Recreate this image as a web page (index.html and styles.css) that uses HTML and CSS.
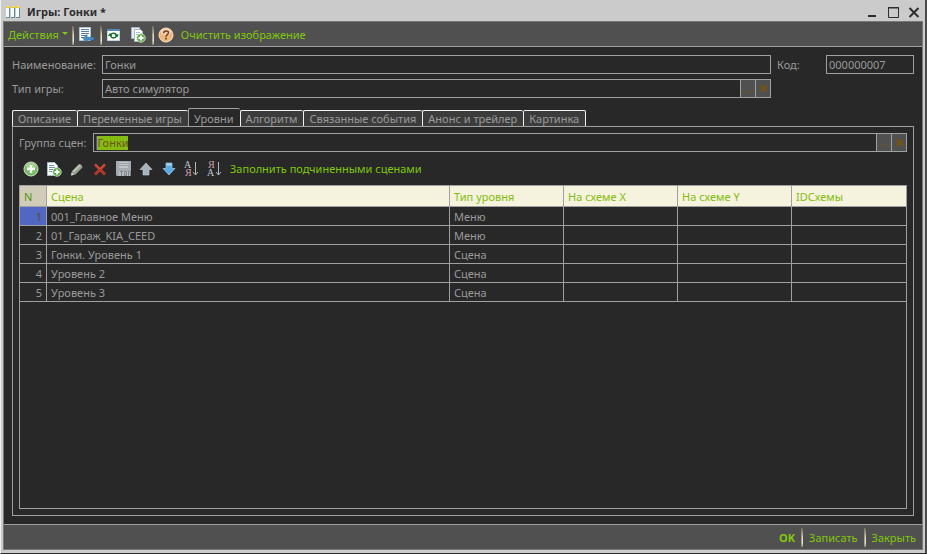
FILE: index.html
```html
<!DOCTYPE html>
<html lang="ru">
<head>
    <meta charset="UTF-8">
    <meta name="viewport" content="width=device-width, initial-scale=1.0">
    <title>Игры: Гонки *</title>
    <link rel="stylesheet" href="styles.css">
</head>
<body>
    <div class="window">
        <!-- Title bar -->
        <header class="titlebar">
            <svg class="title-icon" width="14" height="14" viewBox="0 0 14 14">
                <path fill="#68899f" d="M0 1h4v12H0zM5 1h4v12H5zM10 1h4v12h-4z"/>
                <path fill="#f8fbfc" d="M0 3h3v9H0zM5 3h3v9H5zM10 3h3v9h-3z"/>
                <path fill="#e8c838" d="M0 1h4v2H0zM5 1h4v2H5zM10 1h4v2h-4z"/>
                <path fill="#ffef70" d="M1 1h2v1H1zM6 1h2v1H6zM11 1h2v1h-2z"/>
            </svg>
            <h1 class="title">Игры: Гонки *</h1>
            <button class="win-button" aria-label="Свернуть">
                <svg width="12" height="12" viewBox="0 0 12 12"><path fill="#2d2d2d" d="M2 9h8v2H2z"/></svg>
            </button>
            <button class="win-button" aria-label="Развернуть">
                <svg width="12" height="12" viewBox="0 0 12 12"><path fill="none" stroke="#2d2d2d" d="M1.500 1.500h10v10h-10z"/><path fill="#2d2d2d" d="M1 1h11v1.500H1z"/></svg>
            </button>
            <button class="win-button" aria-label="Закрыть окно">
                <svg width="12" height="12" viewBox="0 0 12 12"><path stroke="#2d2d2d" stroke-width="2" d="M1.500 2l9 9M10.500 2l-9 9"/></svg>
            </button>
        </header>

        <div class="frame">
            <!-- Main toolbar -->
            <div class="toolbar">
                <button class="text-button menu-button">Действия<span class="arrow"></span></button>
                <span class="separator"></span>
                <button class="icon-button" aria-label="Перечитать">
                    <svg width="16" height="16" viewBox="0 0 16 16">
                        <path fill="#fff" stroke="#b4c3d2" d="M1.500.5h11v13h-11z"/>
                        <path stroke="#5d7f9f" d="M3 2.500h8M3 4.500h8M3 6.500h8M3 8.500h5M3 10.500h3"/>
                        <path fill="#4a90c8" stroke="#28618f" stroke-width=".6" d="M5 11.500l4-4v2.700h7v2.800H9v2.500z"/>
                    </svg>
                </button>
                <span class="separator"></span>
                <button class="icon-button" aria-label="Обновить">
                    <svg width="16" height="16" viewBox="0 0 16 16">
                        <path fill="#fff" stroke="#c4d4e2" d="M1.500 2.500h12v11h-12z"/>
                        <path fill="#5588b8" d="M1 2h13v2H1z"/>
                        <path fill="none" stroke="#167032" stroke-width="1.500" d="M4.500 8c1-2.500 5-2.500 6 0M10.500 9c-1 2.500-5 2.500-6 0"/>
                        <path fill="#167032" d="M8.500 7.500h4.500l-2 3zM6.500 9H2l2-3z"/>
                    </svg>
                </button>
                <button class="icon-button copy" aria-label="Скопировать">
                    <svg width="16" height="16" viewBox="0 0 16 16">
                        <path fill="#e7eef4" stroke="#a5b6c5" d="M1.500.5h8v11h-8z"/>
                        <path fill="#fff" stroke="#a5b6c5" d="M4.500 2.500h6l2 2v10h-8z"/>
                        <path stroke="#a9bccc" d="M6 5.500h4M6 7.500h3"/>
                        <circle cx="11" cy="11" r="4.300" fill="#63a850" stroke="#d1e5ca" stroke-width=".8"/>
                        <path stroke="#fff" stroke-width="1.800" d="M11 8.500v5M8.500 11h5"/>
                    </svg>
                </button>
                <span class="separator"></span>
                <button class="icon-button help" aria-label="Справка">
                    <svg width="16" height="16" viewBox="0 0 16 16">
                        <circle cx="8" cy="8" r="7" fill="#f3b77c" stroke="#fbe2c6"/>
                        <ellipse cx="8" cy="5" rx="5" ry="3.500" fill="#f9d3ab"/>
                        <path fill="none" stroke="#6b4630" stroke-width="1.500" d="M5.700 6.300c0-3 4.800-3 4.800-.5C10.500 7.300 8 7.500 8 9.700"/>
                        <path fill="#6b4630" d="M7.200 10.800h1.700v1.700H7.200z"/>
                    </svg>
                </button>
                <button class="text-button">Очистить изображение</button>
            </div>

            <main class="content">
                <div class="form">
                    <label for="name">Наименование:</label>
                    <input class="field" id="name" type="text" value="Гонки">
                    <label for="code">Код:</label>
                    <input class="field" id="code" type="text" value="000000007">
                    <label for="kind">Тип игры:</label>
                    <div class="picker">
                        <input class="field" id="kind" type="text" value="Авто симулятор">
                        <button class="pick" aria-label="Выбрать тип"><svg width="10" height="9" viewBox="0 0 10 9"><path fill="#75550c" d="M0 7h2v1H0zM4 7h2v1H4zM8 7h2v1H8z"/></svg></button>
                        <button class="pick" aria-label="Очистить тип"><svg width="9" height="9" viewBox="0 0 9 9"><path stroke="#75550c" stroke-width="2" d="M1.500 1.500l6 6M7.500 1.500l-6 6"/></svg></button>
                    </div>
                </div>

                <nav class="tabs">
                    <button class="tab">Описание</button>
                    <button class="tab">Переменные игры</button>
                    <button class="tab active">Уровни</button>
                    <button class="tab">Алгоритм</button>
                    <button class="tab">Связанные события</button>
                    <button class="tab">Анонс и трейлер</button>
                    <button class="tab">Картинка</button>
                </nav>

                <section class="panel">
                    <div class="group">
                        <label for="group">Группа сцен:</label>
                        <div class="picker">
                            <div class="field selected-field"><input class="selected" id="group" type="text" value="Гонки"></div>
                            <button class="pick" aria-label="Выбрать группу"><svg width="10" height="9" viewBox="0 0 10 9"><path fill="#75550c" d="M0 7h2v1H0zM4 7h2v1H4zM8 7h2v1H8z"/></svg></button>
                            <button class="pick" aria-label="Очистить группу"><svg width="9" height="9" viewBox="0 0 9 9"><path stroke="#75550c" stroke-width="2" d="M1.500 1.500l6 6M7.500 1.500l-6 6"/></svg></button>
                        </div>
                    </div>

                    <!-- Table toolbar -->
                    <div class="table-tools">
                        <button class="icon-button" aria-label="Добавить">
                            <svg width="16" height="16" viewBox="0 0 16 16">
                                <circle cx="8" cy="8" r="7" fill="#78b764" stroke="#cfe5c4"/>
                                <ellipse cx="8" cy="5" rx="5" ry="3.500" fill="#a4d08f"/>
                                <path stroke="#fff" stroke-width="2.400" d="M8 4v8M4 8h8"/>
                            </svg>
                        </button>
                        <button class="icon-button" aria-label="Добавить копированием">
                            <svg width="16" height="16" viewBox="0 0 16 16">
                                <path fill="#fff" stroke="#a9bccc" d="M1.500 1.500h7l3 3v10h-10z"/>
                                <path stroke="#7192b0" d="M3 4.500h5M3 6.500h6M3 8.500h4M3 10.500h3"/>
                                <circle cx="11" cy="11" r="4.300" fill="#63a850" stroke="#d1e5ca" stroke-width=".8"/>
                                <path stroke="#fff" stroke-width="1.800" d="M11 8.500v5M8.500 11h5"/>
                            </svg>
                        </button>
                        <button class="icon-button" aria-label="Изменить">
                            <svg width="16" height="16" viewBox="0 0 16 16">
                                <path fill="#93a08e" d="M3 10l7-7q3 0 3.500 3.500l-7 7-4.500 1z"/>
                                <path fill="#bcc5b8" d="M4 10l6.500-6.500 1.300 1.300L5 11.500z"/>
                                <path fill="#d5dad2" d="M2 14.500l.7-3 2.300 2.300z"/>
                            </svg>
                        </button>
                        <button class="icon-button" aria-label="Удалить">
                            <svg width="16" height="16" viewBox="0 0 16 16"><path stroke="#b8382c" stroke-width="3" d="M3 3.500l10 10M13 3.500l-10 10"/><path stroke="#d35a4c" d="M3 3l5 5 5-5"  fill="none"/></svg>
                        </button>
                        <button class="icon-button" aria-label="Закончить редактирование">
                            <svg width="16" height="16" viewBox="0 0 16 16">
                                <path fill="#a5abb1" d="M1 0h15v15H2l-1-1z"/>
                                <path fill="#c1c6ca" d="M4 1h9v6H4z"/>
                                <path stroke="#9ba1a6" d="M4 2.500h9M4 4.500h9"/>
                                <path fill="#b8bdc2" d="M4 10h12v5H4z"/>
                                <path fill="none" stroke="#7d8388" d="M5 10.500h3M6.500 10v5M9.500 10.500h2v4h-2zM13.500 15v-4.500h2V15"/>
                            </svg>
                        </button>
                        <button class="icon-button" aria-label="Переместить вверх">
                            <svg width="16" height="16" viewBox="0 0 16 16"><path fill="#a6b3bd" stroke="#cbd3d9" stroke-width=".6" d="M8 2l6 6.500h-3V14H5V8.500H2z"/></svg>
                        </button>
                        <button class="icon-button" aria-label="Переместить вниз">
                            <svg width="16" height="16" viewBox="0 0 16 16"><path fill="#58ace2" stroke="#b4dcf5" stroke-width=".6" d="M8 14L2 7.500h3V2h6v5.500h3z"/><path fill="#a8d9f7" d="M5.500 2.500h5v2h-5z"/></svg>
                        </button>
                        <button class="icon-button sort" aria-label="Сортировать по возрастанию">
                            <svg width="16" height="20" viewBox="0 0 16 20">
                                <text class="sort-up" x="0" y="9">А</text><text class="sort-down" x="1" y="17">Я</text>
                                <path fill="none" stroke="#aebbc5" d="M11.500 3v13M9 13l2.500 3 2.500-3"/>
                            </svg>
                        </button>
                        <button class="icon-button sort" aria-label="Сортировать по убыванию">
                            <svg width="16" height="20" viewBox="0 0 16 20">
                                <text class="sort-down" x="1" y="9">Я</text><text class="sort-up" x="0" y="17">А</text>
                                <path fill="none" stroke="#aebbc5" d="M11.500 3v13M9 13l2.500 3 2.500-3"/>
                            </svg>
                        </button>
                        <button class="text-button">Заполнить подчиненными сценами</button>
                    </div>

                    <div class="grid">
                        <table>
                            <colgroup>
                                <col class="col-n"><col><col class="col-data"><col class="col-data"><col class="col-data"><col class="col-data">
                            </colgroup>
                            <thead>
                                <tr><th>N</th><th>Сцена</th><th>Тип уровня</th><th>На схеме X</th><th>На схеме Y</th><th>IDСхемы</th></tr>
                            </thead>
                            <tbody>
                                <tr class="current"><td>1</td><td>001_Главное Меню</td><td>Меню</td><td></td><td></td><td></td></tr>
                                <tr><td>2</td><td>01_Гараж_KIA_CEED</td><td>Меню</td><td></td><td></td><td></td></tr>
                                <tr><td>3</td><td>Гонки. Уровень 1</td><td>Сцена</td><td></td><td></td><td></td></tr>
                                <tr><td>4</td><td>Уровень 2</td><td>Сцена</td><td></td><td></td><td></td></tr>
                                <tr><td>5</td><td>Уровень 3</td><td>Сцена</td><td></td><td></td><td></td></tr>
                            </tbody>
                        </table>
                    </div>
                </section>
            </main>

            <footer class="footer">
                <button class="text-button primary">OK</button>
                <span class="separator"></span>
                <button class="text-button">Записать</button>
                <span class="separator"></span>
                <button class="text-button">Закрыть</button>
            </footer>
        </div>
    </div>
</body>
</html>
```
FILE: styles.css
```css
* {
    margin: 0;
    padding: 0;
    box-sizing: border-box;
}

body {
    font: 11px/16px "Noto Sans", "Open Sans", sans-serif;
    color: #9a9a9a;
    background: #282828;
}

button,
input {
    font: inherit;
    color: inherit;
    background: none;
    border: 0;
}

svg {
    display: block;
}

/* Window */
.window {
    display: flex;
    flex-direction: column;
    min-height: 100vh;
    padding: 0 2px 3px;
    background: #cbcbcb;
    border: 1px solid #f0f0f0;
    border-width: 0 2px 1px 1px;
    border-color: #f0f0f0 #4a4a4a #282828 #f0f0f0;
}

.titlebar {
    display: flex;
    align-items: center;
    gap: 9px;
    height: 21px;
    padding: 2px 3px 0;
    color: #2d2d2d;
}

.title {
    flex: 1;
    font-size: 11px;
    font-weight: 700;
}

.title-icon {
    margin-right: -2px;
}

.frame {
    flex: 1;
    display: flex;
    flex-direction: column;
    background: #282828;
    border: 1px solid #777;
}

/* Toolbars */
.toolbar {
    display: flex;
    align-items: center;
    gap: 4px;
    height: 25px;
    padding: 2px 4px 0;
    background: #505050;
    border-bottom: 1px solid #a0a0a0;
}

.text-button {
    color: #7fc80a;
    white-space: nowrap;
}

.arrow {
    display: inline-block;
    margin-left: 3px;
    vertical-align: 4px;
    border: 3px solid transparent;
    border-top-color: #7fc80a;
    border-bottom: 0;
}

.separator {
    width: 2px;
    height: 19px;
    background: linear-gradient(90deg, #8c8466, transparent), linear-gradient(#505050, #fff8dc 50%, #fff 80%, #8c8878);
}

.icon-button {
    width: 16px;
    height: 16px;
}

.icon-button + .separator {
    margin-left: 2px;
}

.copy {
    margin-left: 4px;
}

.help {
    margin-right: 3px;
}

/* Form */
.content {
    flex: 1;
    display: flex;
    flex-direction: column;
    padding: 8px;
}

.form {
    display: grid;
    grid-template-columns: 84px 1fr 43px 88px;
    gap: 5px 6px;
    align-items: center;
}

.field {
    flex: 1;
    width: 100%;
    min-width: 0;
    height: 19px;
    padding: 0 2px;
    border: 1px solid #a0a0a0;
}

.picker {
    flex: 1;
    display: flex;
}

.pick {
    display: flex;
    align-items: center;
    justify-content: center;
    width: 15px;
    height: 19px;
    background: #505050;
    border: 1px solid #a0a0a0;
    border-left: 0;
}

.pick svg {
    flex: none;
}

/* Tabs */
.tabs {
    display: flex;
    align-items: flex-end;
    margin-top: 10px;
}

.tab {
    height: 16px;
    padding: 0 6px 0 5px;
    line-height: 15px;
    background: #3c3c3c;
    border: 1px solid #f0f0f0;
    border-width: 1px 0 0 1px;
    border-radius: 2px 2px 0 0;
}

.tab:last-child {
    border-right-width: 1px;
}

.tab.active {
    height: 19px;
    margin-bottom: -1px;
    background: #282828;
    border-color: #a0a0a0;
}

.panel {
    flex: 1;
    display: flex;
    flex-direction: column;
    padding: 6px;
    border: 1px solid #a0a0a0;
}

.group {
    display: flex;
    align-items: center;
    gap: 7px;
}

.selected-field {
    display: flex;
    align-items: center;
}

.selected {
    width: 32px;
    height: 14px;
    color: #6b5312;
    background: #84bd10;
    border-left: 1px solid #6a35d8;
}

.table-tools {
    display: flex;
    align-items: center;
    gap: 7px;
    height: 33px;
    padding: 0 4px;
}

.sort {
    height: 20px;
}

/* Levels table */
.grid {
    flex: 1;
    border: 1px solid #a0a0a0;
}

table {
    width: 100%;
    table-layout: fixed;
    border-spacing: 0;
}

.col-n {
    width: 27px;
}

.col-data {
    width: 114px;
}

th,
td {
    height: 19px;
    padding: 1px 4px 0;
    text-align: left;
    border: 1px solid #a0a0a0;
    border-width: 0 1px 1px 0;
}

th {
    height: 21px;
    color: #84bd10;
    font-weight: 400;
    background: #f5f2dd;
}

th:first-child {
    color: #4e9a0a;
    background: #d0ccb8;
}

td:first-child {
    text-align: right;
}

th:last-child,
td:last-child {
    border-right: 0;
}

.current td:first-child {
    color: #5d4c23;
    background: #5068c4;
}

.sort-up,
.sort-down {
    font: 10px "Liberation Serif", serif;
    fill: #b8c8d4;
}

.sort-down {
    fill: #d0a0a8;
}

/* Footer */
.footer {
    display: flex;
    align-items: center;
    justify-content: flex-end;
    gap: 6px;
    height: 25px;
    padding: 1px 6px 0;
    background: #505050;
    border-top: 1px solid #a0a0a0;
}

.primary {
    font-weight: 700;
}
```
